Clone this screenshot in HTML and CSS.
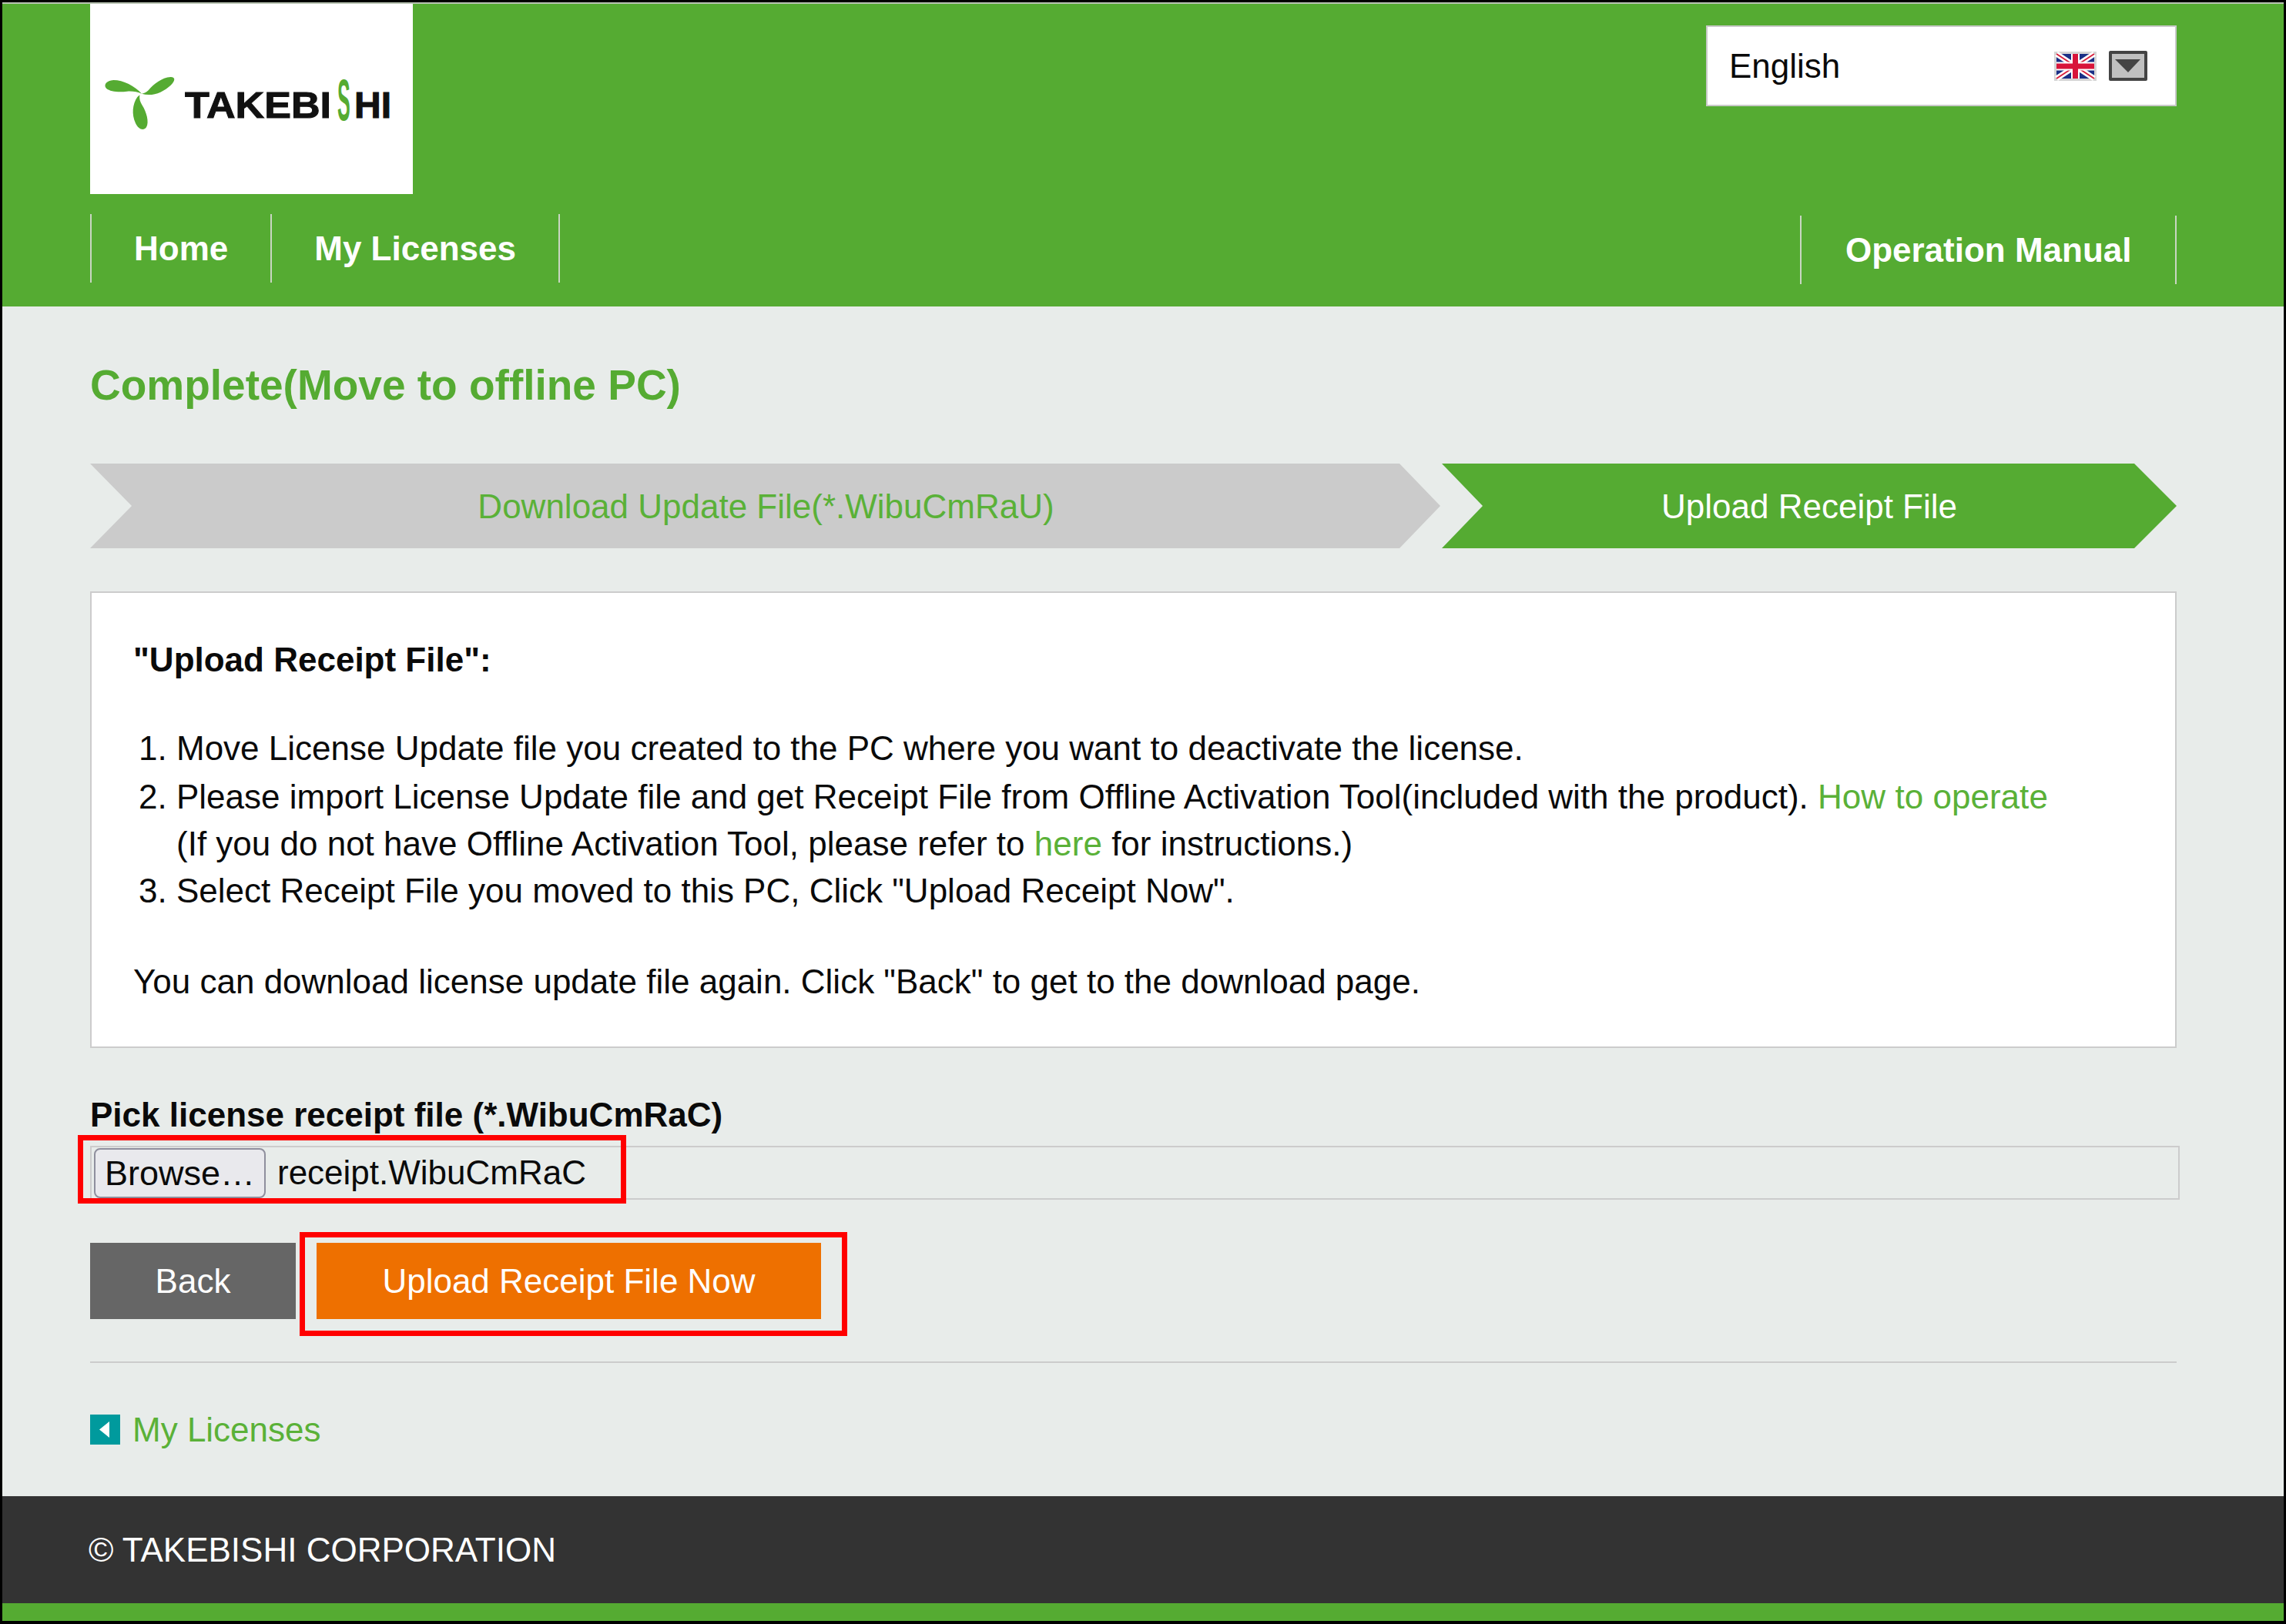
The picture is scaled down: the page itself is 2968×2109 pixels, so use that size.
FILE: index.html
```html
<!DOCTYPE html>
<html lang="en">
<head>
<meta charset="utf-8">
<title>Complete(Move to offline PC)</title>
<link rel="stylesheet" href="styles.css">
</head>
<body>
<div class="frame">
  <header class="header">
    <div class="header-top">
      <a class="logo" href="#">
        <svg class="logo-svg" viewBox="0 0 419 247" width="419" height="247">
          <g fill="#55ab32" transform="translate(-7 15) scale(.3333)">
            <path d="M222 305C195 275 150 252 112 252C85 254 72 270 84 284C100 298 135 300 165 296C185 294 205 298 222 305Z"/>
            <path d="M222 305C262 318 305 300 335 272C352 256 355 240 335 240C300 242 268 268 248 292C238 302 230 304 222 305Z"/>
            <path d="M205 318C186 345 182 385 198 420C208 442 228 452 240 436C252 415 240 375 224 350C216 338 212 326 214 310Z"/>
          </g>
          <text class="logo-word" x="123" y="148" textLength="190" lengthAdjust="spacingAndGlyphs">TAKEBI</text>
          <text class="logo-s" transform="translate(321 151) scale(.33 1)">S</text>
          <text class="logo-word" x="343" y="148" textLength="48" lengthAdjust="spacingAndGlyphs">HI</text>
        </svg>
      </a>
      <div class="lang">
        <span>English</span>
        <span class="lang-icons">
          <svg class="flag" viewBox="0 0 55 38" width="55" height="38">
            <rect width="55" height="38" fill="#d4d4d4"/>
            <rect x="3" y="3" width="49" height="32" fill="#1a2f86"/>
            <path d="M3 3L52 35M52 3L3 35" stroke="#fff" stroke-width="7"/>
            <path d="M3 3L52 35M52 3L3 35" stroke="#d8203c" stroke-width="2"/>
            <path d="M27.500 3V35M3 19H52" stroke="#fff" stroke-width="11"/>
            <path d="M27.500 3V35M3 19H52" stroke="#d8143a" stroke-width="7"/>
          </svg>
          <span class="lang-arrow"><svg viewBox="0 0 42 31" width="42" height="31"><path d="M4 7H37L21 24Z" fill="#444"/></svg></span>
        </span>
      </div>
    </div>
    <nav class="nav">
      <ul class="nav-list">
        <li class="nav-item"><a href="#">Home</a></li>
        <li class="nav-item"><a href="#">My Licenses</a></li>
      </ul>
      <ul class="nav-list nav-right">
        <li class="nav-item"><a href="#">Operation Manual</a></li>
      </ul>
    </nav>
  </header>

  <main class="main">
    <h1 class="title">Complete(Move to offline PC)</h1>
    <div class="steps">
      <div class="step step-done">Download Update File(*.WibuCmRaU)</div>
      <div class="step step-active">Upload Receipt File</div>
    </div>
    <section class="panel">
      <p class="panel-head">"Upload Receipt File":</p>
      <ol class="panel-list">
        <li class="panel-item-first">Move License Update file you created to the PC where you want to deactivate the license.</li>
        <li>Please import License Update file and get Receipt File from Offline Activation Tool(included with the product). <a class="text-link" href="#">How to operate</a><br>(If you do not have Offline Activation Tool, please refer to <a class="text-link" href="#">here</a> for instructions.)</li>
        <li>Select Receipt File you moved to this PC, Click "Upload Receipt Now".</li>
      </ol>
      <p class="panel-foot">You can download license update file again. Click "Back" to get to the download page.</p>
    </section>
    <label class="file-label">Pick license receipt file (*.WibuCmRaC)</label>
    <div class="file-row">
      <button class="browse" type="button">Browse…</button>
      <span class="file-name">receipt.WibuCmRaC</span>
      <span class="mark mark-file"></span>
    </div>
    <div class="actions">
      <a class="btn btn-back" href="#">Back</a>
      <a class="btn btn-upload" href="#">Upload Receipt File Now<span class="mark mark-upload"></span></a>
    </div>
    <hr class="rule">
    <a class="back-link" href="#">
      <span class="back-icon"><svg viewBox="0 0 39 39" width="39" height="39"><path d="M25 9V30L12 19.500Z" fill="#fff"/></svg></span>
      My Licenses
    </a>
  </main>

  <footer class="footer">© TAKEBISHI CORPORATION</footer>
  <div class="footer-bar"></div>
</div>
</body>
</html>
```

FILE: styles.css
```css
* { box-sizing: border-box; }
html, body { margin: 0; padding: 0; }
body {
  font-family: "Liberation Sans", Arial, sans-serif;
  font-size: 44px;
  line-height: 61px;
  color: #0a0a0a;
  background: #e8ecea;
}
a { color: #5ab138; text-decoration: none; }
.frame {
  height: 2109px;
  border: 3px solid #000;
  border-bottom-width: 4px;
  display: flex;
  flex-direction: column;
}
.header {
  height: 395px;
  background: #55ab32;
  border-top: 2px solid #b9c4b3;
  padding: 0 139px 0 114px;
  flex: none;
}
.header-top {
  display: flex;
  justify-content: space-between;
  align-items: flex-start;
  height: 273px;
}
.logo {
  display: block;
  width: 419px;
  height: 247px;
  background: #fff;
}
.logo-svg { display: block; }
.logo-word {
  font-family: "Liberation Sans", sans-serif;
  font-weight: 700;
  font-size: 48px;
  fill: #111;
  stroke: #111;
  stroke-width: 1px;
}
.logo-s {
  font-family: "Liberation Sans", sans-serif;
  font-weight: 700;
  font-size: 76px;
  fill: #55ab32;
}
.lang {
  width: 611px;
  height: 105px;
  margin-top: 28px;
  background: #fff;
  border: 2px solid #c9c9c9;
  display: flex;
  align-items: center;
  justify-content: space-between;
  padding: 0 36px 0 28px;
}
.lang-icons { display: flex; align-items: center; gap: 16px; }
.flag { display: block; }
.lang-arrow {
  display: block;
  width: 50px;
  height: 39px;
  background: #c0c0c0;
  border: 4px solid #444;
  border-radius: 2px;
}
.lang-arrow svg { display: block; }
.nav {
  display: flex;
  justify-content: space-between;
  align-items: flex-start;
}
.nav-list {
  display: flex;
  margin: 0;
  padding: 0;
  list-style: none;
  border-right: 2px solid #c9d6c2;
  height: 89px;
}
.nav-right { margin-top: 2px; }
.nav-item {
  border-left: 2px solid #c9d6c2;
  padding: 0 55px;
  display: flex;
  align-items: center;
}
.nav-right .nav-item { padding: 0 56.5px; }
.nav-item a {
  color: #fff;
  font-weight: 700;
  font-size: 44px;
}
.main {
  flex: 1;
  padding: 0 139px 0 114px;
  display: flex;
  flex-direction: column;
  align-items: stretch;
}
.title {
  margin: 72px 0 72px;
  font-size: 55px;
  line-height: 60px;
  font-weight: 700;
  color: #55ab32;
}
.steps {
  display: grid;
  grid-template-columns: 1755fr 954fr;
  height: 110px;
}
.step {
  display: flex;
  align-items: center;
  justify-content: center;
}
.step-done {
  background: #cbcbcb;
  color: #5ab138;
  clip-path: polygon(0 0, calc(100% - 55px) 0, calc(100% - 2px) 50%, calc(100% - 55px) 100%, 0 100%, 54px 50%);
}
.step-active {
  background: #55ab32;
  color: #fff;
  clip-path: polygon(0 0, calc(100% - 55px) 0, 100% 50%, calc(100% - 55px) 100%, 0 100%, 53px 50%);
}
.panel {
  margin-top: 56px;
  height: 593px;
  background: #fff;
  border: 2px solid #ccc;
  padding: 56px 54px 0;
}
.panel-head { margin: 0; font-weight: 700; }
.panel-list { margin: 54px 0 57px; padding: 0 0 0 56px; }
.panel-item-first { margin-bottom: 2px; }
.text-link { letter-spacing: .03px; }
.panel-foot { margin: 0; }
.file-label {
  display: block;
  margin-top: 57px;
  font-weight: 700;
  line-height: 60px;
}
.file-row {
  position: relative;
  width: 2713px;
  height: 70px;
  margin-top: 10px;
  border: 2px solid #ccc;
  padding-left: 3px;
  display: flex;
  align-items: center;
  gap: 15px;
}
.browse {
  width: 223px;
  height: 65px;
  padding: 0;
  font: inherit;
  font-size: 45px;
  color: #0a0a0a;
  background: #e9e9ed;
  border: 2px solid #8f8f9d;
  border-radius: 8px;
}
.file-name { line-height: 60px; }
.mark {
  position: absolute;
  border: 7px solid #f00;
  pointer-events: none;
}
.mark-file { left: -18px; top: -16px; width: 712px; height: 89px; }
.actions {
  display: flex;
  gap: 27px;
  margin-top: 56px;
}
.btn {
  position: relative;
  height: 99px;
  display: flex;
  align-items: center;
  justify-content: center;
  color: #fff;
}
.btn-back { width: 267px; background: #666; }
.btn-upload { width: 655px; background: #ee7000; }
.mark-upload { left: -22px; top: -14px; width: 711px; height: 135px; }
.rule {
  width: 100%;
  height: 2px;
  margin: 55px 0 0;
  border: 0;
  background: #ccc;
}
.back-link {
  display: flex;
  align-items: center;
  gap: 16px;
  margin-top: 67px;
  height: 39px;
}
.back-icon { display: block; width: 39px; height: 39px; background: #009a9d; }
.back-icon svg { display: block; }
.footer {
  flex: none;
  height: 139px;
  background: #333;
  color: #fff;
  padding-left: 112px;
  display: flex;
  align-items: center;
}
.footer-bar { flex: none; height: 23px; background: #55ab32; }
```
